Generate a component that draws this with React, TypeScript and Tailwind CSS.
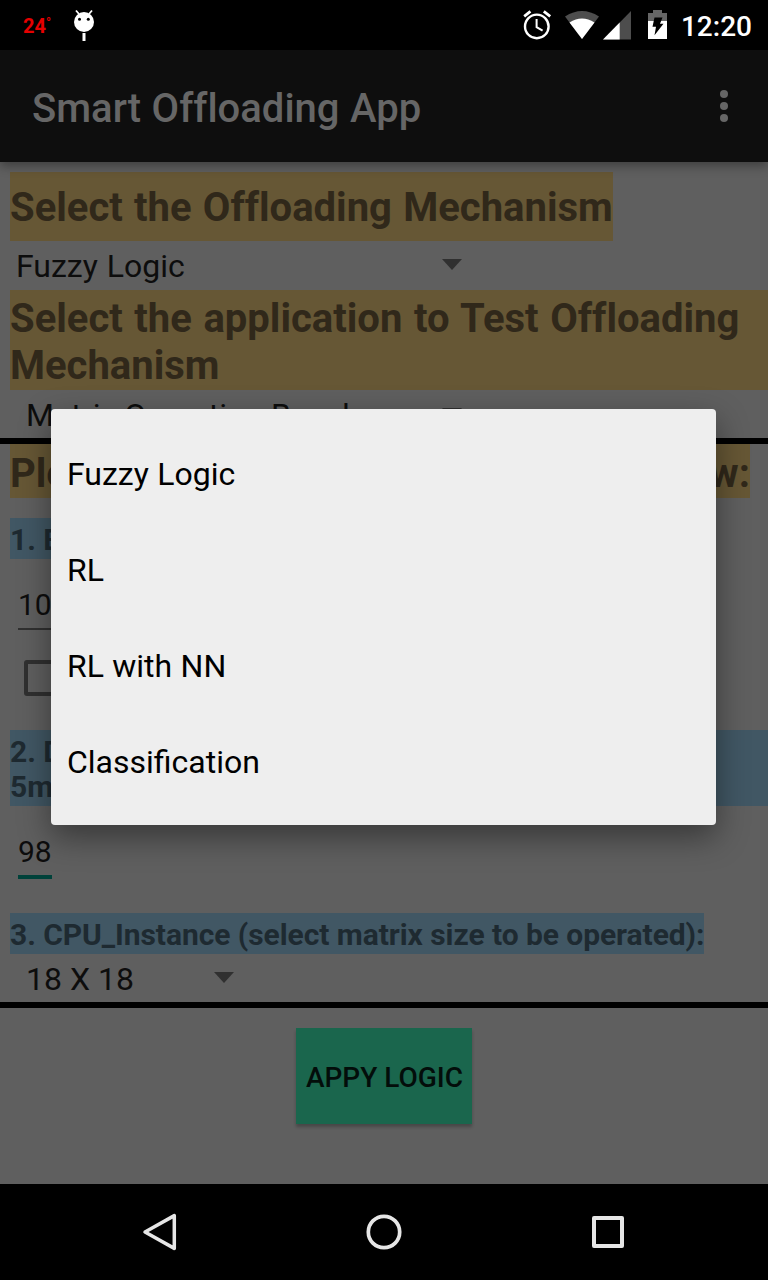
import React from "react";

const menuItems = ["Fuzzy Logic", "RL", "RL with NN", "Classification"];

function StatusBar() {
  return (
    <div className="flex h-[50px] shrink-0 items-center bg-black pl-[23px] pr-4 text-white">
      <span className="flex w-[28px] text-[20px] font-bold leading-[50px] text-[#e60000]">
        <span className="mt-[3px] leading-[47px]">24</span>
        <span className="-mt-[1px] text-[13px] leading-[47px]">°</span>
      </span>
      <svg className="ml-[21px] shrink-0" width="24" height="34" viewBox="0 0 24 34">
        <circle cx="12" cy="14" r="10" fill="white" />
        <path d="M7 6 4 2.500M17 6l3-3.500" stroke="white" strokeWidth="1.8" />
        <path d="M12 25v8" stroke="white" strokeWidth="3" />
        <circle cx="7.5" cy="11.3" r="1.5" fill="black" />
        <circle cx="16.3" cy="11.3" r="1.5" fill="black" />
      </svg>
      <div className="ml-auto flex items-center">
        <svg width="148" height="50" viewBox="520 0 148 50">
          <g transform="translate(1)">
            <circle cx="536.8" cy="26.4" r="11.8" fill="none" stroke="white" strokeWidth="2.4" />
            <path d="M536.6 19v8.2l6 3.5" fill="none" stroke="white" strokeWidth="2" />
            <path d="M524.2 16.3l6.200-4.900M543.800 11.400l6.400 4.900" stroke="white" strokeWidth="2.800" />
            <path d="M582 39 565 16.500Q582 5.500 599 16.500Z" fill="#4d4d4d" />
            <path d="M582 39 569.500 22.500Q582 14.500 594.500 22.500Z" fill="white" />
            <path d="M631 11v28.500h-28Z" fill="#4d4d4d" />
            <path d="M619.700 22.500V39.500h-16.700Z" fill="white" />
            <path d="M648 21v-8h5v-3h9v3h5v8Z" fill="#666" />
            <path d="M648 21h19v18h-19Z" fill="white" />
            <path d="M654.500 17.500h8l-2.500 6.200h3.500l-9 11.500 1.500-8.500h-3.500Z" fill="black" />
          </g>
        </svg>
        <span className="ml-[14px] mt-[3px] text-[28px] font-medium leading-[47px]">12:20</span>
      </div>
    </div>
  );
}

function AppBar() {
  return (
    <header className="z-10 flex h-[112px] shrink-0 items-center justify-between bg-[#0e0e0e] pl-8 pr-[38px] text-[#666] shadow-[0_4px_10px_rgba(0,0,0,0.35)]">
      <h1 className="mt-1 text-[40px] font-medium leading-[47px] [font-variant-ligatures:none] [word-spacing:0.6px]">Smart Offloading App</h1>
      <svg width="12" height="36" viewBox="0 0 12 36" fill="#666">
        <circle cx="6" cy="6" r="4" />
        <circle cx="6" cy="18" r="4" />
        <circle cx="6" cy="30" r="4" />
      </svg>
    </header>
  );
}

function Arrow() {
  return (
    <svg width="20" height="11" viewBox="0 0 20 11" className="mb-[2px] shrink-0">
      <path d="M0 0h20L10 11Z" fill="#303030" />
    </svg>
  );
}

function Navigation() {
  return (
    <nav className="flex h-24 shrink-0 items-center justify-between bg-black px-[140px]">
      <svg width="40" height="40" viewBox="0 0 40 40" fill="none" stroke="#e6e6e6" strokeLinejoin="round">
        <path d="M34.300 3.600v32.800L5 20Z" strokeWidth="3.500" />
      </svg>
      <svg width="40" height="40" viewBox="0 0 40 40" fill="none" stroke="#e6e6e6" strokeWidth="3.700">
        <circle cx="20" cy="20" r="15.700" />
      </svg>
      <svg width="40" height="40" viewBox="0 0 40 40" fill="none" stroke="#e6e6e6" strokeWidth="4" strokeLinejoin="round">
        <path d="M6 6h28v28H6Z" />
      </svg>
    </nav>
  );
}

export default function App() {
  return (
    <div className="relative flex h-[1280px] w-[768px] flex-col overflow-hidden bg-[#5f5f5f] font-['Roboto',sans-serif] text-[#0d0d0d]">
      <StatusBar />
      <AppBar />
      <main className="flex h-[1022px] flex-col items-start pt-[10px]">
        <h2 className="ml-[10px] flex h-[69px] w-[603px] items-center whitespace-nowrap bg-[#665735] pt-[2px] text-[40px] font-bold leading-[47px] text-[#30281a] [font-variant-ligatures:none] [word-spacing:1.3px]">Select the Offloading Mechanism</h2>
        <div className="flex h-[49px] w-[462px] items-center justify-between pl-4 text-[32px]">
          <span className="[word-spacing:1px]">Fuzzy Logic</span><Arrow />
        </div>
        <h2 className="ml-[10px] h-[100px] w-[758px] bg-[#665735] pt-[5px] text-[40px] font-bold leading-[47px] text-[#30281a] [font-variant-ligatures:none] [word-spacing:1.6px]">Select the application to Test Offloading Mechanism</h2>
        <div className="flex h-12 w-[462px] items-center justify-between pl-[26px] text-[32px]">
          <span className="w-[376px] overflow-hidden whitespace-nowrap pt-[1px]">Matrix Operation Benchmark</span><Arrow />
        </div>
        <div className="h-[6px] w-full bg-black" />
        <h2 className="ml-[10px] flex h-[54px] w-[740px] justify-between bg-[#665735] pt-[6px] text-[40px] font-bold leading-[47px] text-[#30281a]"><span>Please</span><span>below:</span></h2>
        <h3 className="ml-[10px] mt-5 h-[41px] w-[400px] bg-[#415764] pt-[4px] text-[30px] font-bold leading-[35px] text-[#1e2a31]">1. B</h3>
        <div className="ml-[18px] mt-[25px] h-[46px] w-[60px] border-b-2 border-[#303030] text-[30px] leading-[41px]">100</div>
        <div className="ml-6 mt-[30px] h-9 w-9 rounded-[3px] border-4 border-[#303030]" />
        <h3 className="ml-[10px] mt-[34px] h-[76px] w-[758px] bg-[#415764] pt-[4px] text-[30px] font-bold leading-[35px] text-[#1e2a31]">2. D<br />5m</h3>
        <div className="ml-[18px] mt-[25px] h-[48px] w-[34px] border-b-4 border-[#00423a] text-[30px] leading-[42px]">98</div>
        <h3 className="ml-[10px] mt-[34px] h-[41px] w-[694px] whitespace-nowrap bg-[#415764] pt-[4px] text-[30px] font-bold leading-[35px] tracking-[-0.06px] text-[#1e2a31]">3. CPU_Instance (select matrix size to be operated):</h3>
        <div className="flex h-12 w-[234px] items-center justify-between pl-[26px] text-[32px]">
          <span className="pt-[2px]">18 X 18</span><Arrow />
        </div>
        <div className="h-[6px] w-full bg-black" />
        <button className="mt-5 flex h-24 w-[176px] items-center justify-center self-center whitespace-nowrap bg-[#1a664d] pl-[1px] pt-[3px] text-[28px] font-medium text-[#030d0a] shadow-[0_3px_3px_rgba(0,0,0,0.25)]">APPY LOGIC</button>
      </main>
      <Navigation />
      <div role="listbox" className="absolute left-[51px] top-[409px] z-20 flex h-[416px] w-[665px] flex-col rounded-[4px] bg-[#eee] py-4 text-[32px] text-black shadow-[0_12px_32px_rgba(0,0,0,0.42)]">
        {menuItems.map((item) => (
          <div key={item} role="option" className="flex h-24 items-center px-4 pt-[2px] [word-spacing:0.4px]">{item}</div>
        ))}
      </div>
    </div>
  );
}
